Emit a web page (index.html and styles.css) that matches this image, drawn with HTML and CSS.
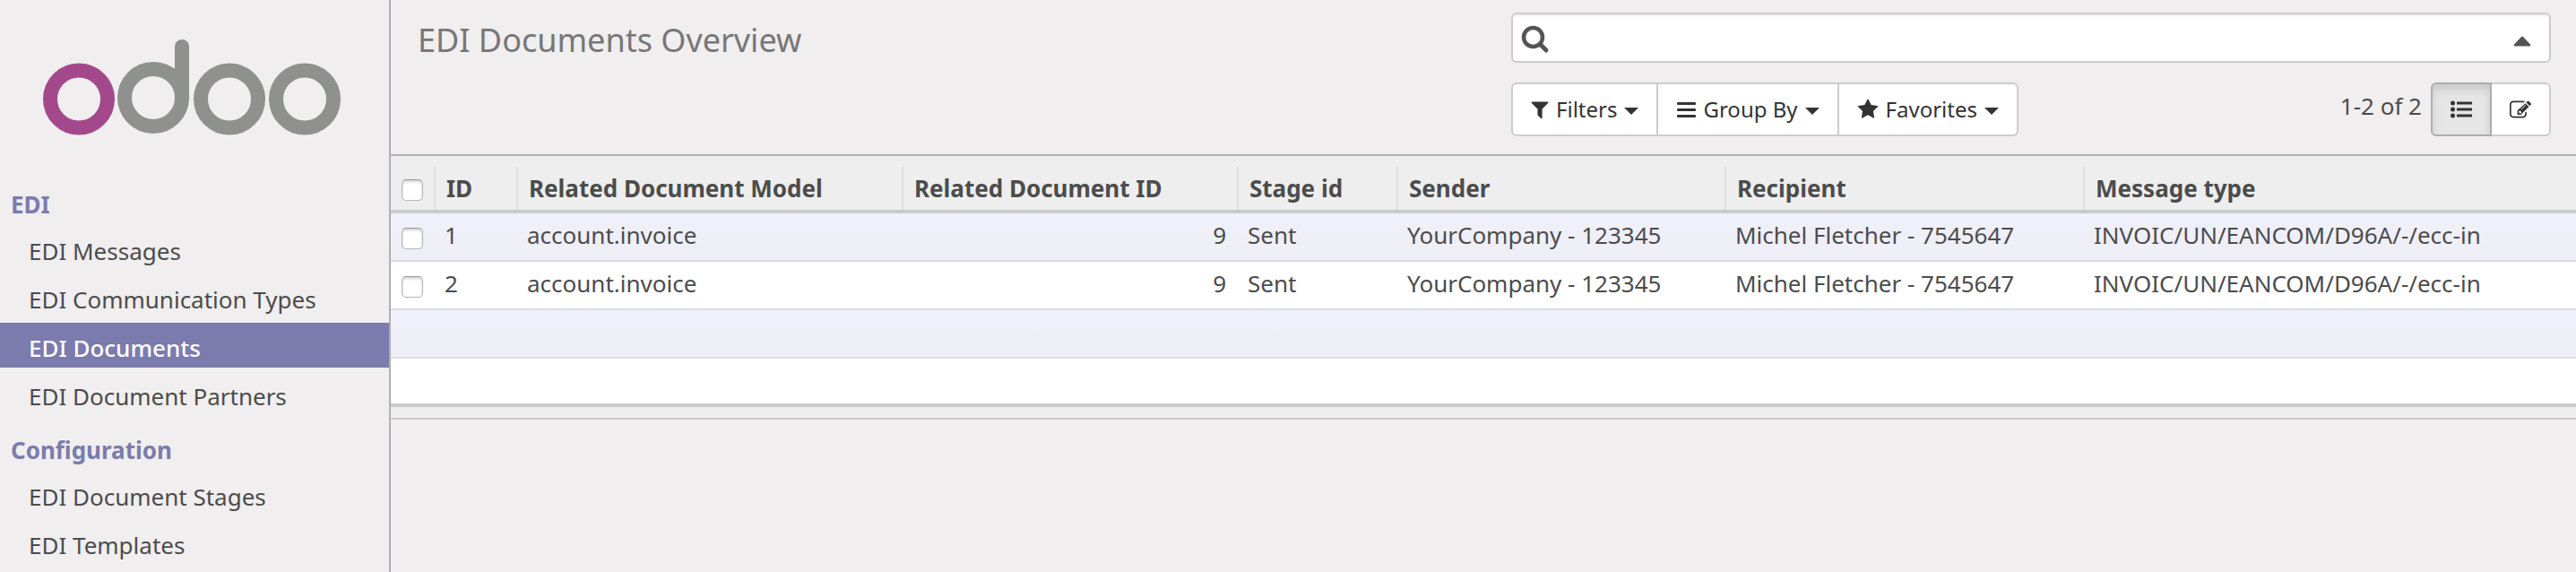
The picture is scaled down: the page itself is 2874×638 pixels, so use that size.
FILE: index.html
```html
<!DOCTYPE html>
<html lang="en">
<head>
<meta charset="utf-8">
<title>EDI Documents Overview - Odoo</title>
<link rel="stylesheet" href="styles.css">
</head>
<body>
<div class="app">
  <aside class="sidebar">
    <a class="logo" href="#" aria-label="odoo">
      <svg width="340" height="112" viewBox="48 42 340 112" fill="none" stroke="#8f918f" stroke-width="16" stroke-linecap="round">
        <circle cx="89" cy="110.500" r="32" stroke="#a3498b"/>
        <circle cx="172" cy="109" r="32"/>
        <path d="M204 52V109"/>
        <circle cx="257" cy="110.500" r="32"/>
        <circle cx="341" cy="110.500" r="32"/>
      </svg>
    </a>
    <nav class="menu">
      <section class="menu-section">
        <h2 class="menu-title">EDI</h2>
        <ul class="menu-list">
          <li><a class="menu-link" href="#">EDI Messages</a></li>
          <li><a class="menu-link" href="#">EDI Communication Types</a></li>
          <li><a class="menu-link active" href="#" aria-current="page">EDI Documents</a></li>
          <li><a class="menu-link" href="#">EDI Document Partners</a></li>
        </ul>
      </section>
      <section class="menu-section">
        <h2 class="menu-title">Configuration</h2>
        <ul class="menu-list">
          <li><a class="menu-link" href="#">EDI Document Stages</a></li>
          <li><a class="menu-link" href="#">EDI Templates</a></li>
        </ul>
      </section>
    </nav>
  </aside>

  <main class="content">
    <header class="control-panel">
      <h1 class="page-title">EDI Documents Overview</h1>
      <div class="panel-tools">
        <div class="search">
          <svg class="search-icon" width="32" height="32" viewBox="0 0 32 32" fill="none" stroke="#555" stroke-linecap="round">
            <circle cx="13.500" cy="13.500" r="10.500" stroke-width="4.500"/>
            <path d="M21.500 21.500L28 28" stroke-width="5"/>
          </svg>
          <input class="search-input" type="text" aria-label="Search">
          <button class="search-toggle" type="button" aria-label="Advanced search">
            <svg width="20" height="12" viewBox="0 0 20 12"><path d="M10 0.500Q10.500 0.500 11 1L19 9.500Q20 11.500 18 11.500H2Q0 11.500 1 9.500L9 1Q9.500 0.500 10 0.500z" fill="#555"/></svg>
          </button>
        </div>
        <div class="tool-row">
          <div class="btn-group">
            <button class="btn" type="button">
              <svg width="20" height="24" viewBox="180 0 1432 1792"><path fill="currentColor" d="M1595 295q17 41-14 70l-493 493v742q0 42-39 59-13 5-25 5-27 0-45-19l-256-256q-19-19-19-45v-486L211 365q-31-29-14-70 17-39 59-39h1280q42 0 59 39z"/></svg>
              <span>Filters</span><span class="caret"></span>
            </button>
            <button class="btn" type="button">
              <svg width="22" height="24" viewBox="0 0 22 24" fill="currentColor"><rect x="1" y="4" width="21" height="3" rx="1"/><rect x="1" y="11" width="21" height="3" rx="1"/><rect x="1" y="18" width="21" height="3" rx="1"/></svg>
              <span>Group By</span><span class="caret"></span>
            </button>
            <button class="btn" type="button">
              <svg width="24" height="24" viewBox="0 0 1792 1792"><path fill="currentColor" d="M1728 647q0 22-26 48l-363 354 86 500q1 7 1 20 0 21-10.500 35.500T1385 1619q-19 0-40-12l-449-236-449 236q-22 12-40 12-21 0-31.500-14.500T365 1569q0-6 2-20l86-500L89 695q-25-27-25-48 0-37 56-46l502-73 225-455q19-41 49-41t49 41l225 455 502 73q56 9 56 46z"/></svg>
              <span>Favorites</span><span class="caret"></span>
            </button>
          </div>
          <div class="pager-views">
            <span class="pager">1-2 of 2</span>
            <div class="btn-group">
              <button class="btn btn-view pressed" type="button" aria-label="List" aria-pressed="true">
                <svg width="24" height="24" viewBox="0 0 24 24" fill="currentColor"><circle cx="2.500" cy="5" r="2.500"/><circle cx="2.500" cy="12" r="2.500"/><circle cx="2.500" cy="19" r="2.500"/><rect x="7" y="3.500" width="17" height="3"/><rect x="7" y="10.500" width="17" height="3"/><rect x="7" y="17.500" width="17" height="3"/></svg>
              </button>
              <button class="btn btn-view" type="button" aria-label="Form">
                <svg width="24" height="24" viewBox="0 -64 1792 1792"><path fill="currentColor" d="M888 1184l116-116-152-152-116 116v56h96v96h56zm440-720q-16-16-33 1L945 815q-17 17-1 33t33-1l350-350q17-17 1-33zm80 594v190q0 119-84.500 203.500T1120 1536H288q-119 0-203.500-84.500T0 1248V416q0-119 84.500-203.500T288 128h832q63 0 117 25 15 7 18 23 3 17-9 29l-49 49q-14 14-32 8-23-6-45-6H288q-66 0-113 47t-47 113v832q0 66 47 113t113 47h832q66 0 113-47t47-113v-126q0-13 9-22l64-64q15-15 35-7t20 29zm-96-738l288 288-672 672H640V928zm444 132l-92 92-288-288 92-92q28-28 68-28t68 28l152 152q28 28 28 68t-28 68z"/></svg>
              </button>
            </div>
          </div>
        </div>
      </div>
    </header>

    <table class="list">
      <colgroup>
        <col class="col-check"><col class="col-id"><col class="col-model"><col class="col-docid"><col class="col-stage"><col class="col-sender"><col class="col-recipient"><col>
      </colgroup>
      <thead>
        <tr>
          <th class="check"><input type="checkbox" aria-label="Select all"></th>
          <th>ID</th>
          <th>Related Document Model</th>
          <th>Related Document ID</th>
          <th>Stage id</th>
          <th>Sender</th>
          <th>Recipient</th>
          <th>Message type</th>
        </tr>
      </thead>
      <tbody>
        <tr>
          <td class="check"><input type="checkbox" aria-label="Select document 1"></td>
          <td>1</td>
          <td>account.invoice</td>
          <td class="number">9</td>
          <td>Sent</td>
          <td>YourCompany - 123345</td>
          <td>Michel Fletcher - 7545647</td>
          <td>INVOIC/UN/EANCOM/D96A/-/ecc-in</td>
        </tr>
        <tr>
          <td class="check"><input type="checkbox" aria-label="Select document 2"></td>
          <td>2</td>
          <td>account.invoice</td>
          <td class="number">9</td>
          <td>Sent</td>
          <td>YourCompany - 123345</td>
          <td>Michel Fletcher - 7545647</td>
          <td>INVOIC/UN/EANCOM/D96A/-/ecc-in</td>
        </tr>
        <tr><td colspan="8">&nbsp;</td></tr>
        <tr><td colspan="8">&nbsp;</td></tr>
      </tbody>
      <tfoot>
        <tr><td colspan="8"></td></tr>
      </tfoot>
    </table>
  </main>
</div>
</body>
</html>
```
FILE: styles.css
```css
* {
  box-sizing: border-box;
}

body {
  margin: 0;
  background: #f0eeee;
  color: #4c4c4c;
  font-family: "Noto Sans", "Open Sans", sans-serif;
  font-size: 26px;
  line-height: 36px;
}

svg {
  display: block;
  flex: none;
}

.app {
  display: flex;
  min-height: 100vh;
}

/* Sidebar */

.sidebar {
  flex: none;
  width: 436px;
  border-right: 2px solid #afafb6;
}

.logo {
  display: flex;
  justify-content: center;
  padding: 42px 0 36px;
}

.menu-section {
  padding-top: 20px;
}

.menu-title {
  margin: 0 0 6px;
  padding-left: 12px;
  color: #7c7bad;
  font-size: 26px;
  font-weight: 700;
}

.menu-list {
  display: flex;
  flex-direction: column;
  gap: 4px;
  margin: 0;
  padding: 0;
  list-style: none;
}

.menu-link {
  display: block;
  padding: 10px 0 4px 32px;
  color: inherit;
  text-decoration: none;
  white-space: nowrap;
}

.menu-link.active {
  background: #7c7bad;
  color: #fff;
  font-weight: 500;
}

/* Control panel */

.content {
  flex: 1;
  min-width: 0;
}

.control-panel {
  display: grid;
  grid-template-columns: 61fr 58fr;
  padding: 14px 28px 20px 30px;
  border-bottom: 2px solid #afafb6;
}

.page-title {
  margin: 0;
  padding-top: 5px;
  color: #777;
  font-size: 36px;
  font-weight: 400;
  line-height: 52px;
}

.search {
  display: flex;
  align-items: center;
  height: 56px;
  padding: 4px 20px 0 9px;
  border: 2px solid #ccc;
  border-radius: 6px;
  background: #fff;
  box-shadow: inset 0 2px 2px rgba(0, 0, 0, 0.075);
}

.search-input {
  flex: 1;
  min-width: 0;
  border: 0;
  background: none;
  font: inherit;
  outline: 0;
}

.search-toggle {
  padding: 4px 0 0;
  border: 0;
  background: none;
}

.tool-row {
  display: flex;
  justify-content: space-between;
  margin-top: 22px;
}

.btn-group {
  display: flex;
}

.btn {
  display: flex;
  align-items: center;
  gap: 8px;
  height: 60px;
  margin: 0 0 0 -2px;
  padding: 0 20px;
  border: 2px solid #ccc;
  background: #fff;
  color: #333;
  font-family: inherit;
  font-size: 24px;
  line-height: 34px;
}

.btn:first-child {
  margin-left: 0;
  border-radius: 6px 0 0 6px;
}

.btn:last-child {
  border-radius: 0 6px 6px 0;
}

.btn-view {
  width: 68px;
}

.btn.pressed {
  z-index: 1;
  border-color: #adadad;
  background: #e6e6e6;
  box-shadow: inset 0 6px 10px rgba(0, 0, 0, 0.125);
}

.caret {
  margin-top: 4px;
  border: 8px solid transparent;
  border-top-color: currentColor;
  border-bottom: 0;
}

.pager-views {
  display: flex;
  gap: 10px;
}

.pager {
  padding-top: 8px;
}

/* Record list */

.list {
  width: 100%;
  border-collapse: separate;
  border-spacing: 0;
  table-layout: fixed;
}

.col-check { width: 48px; }
.col-id { width: 92px; }
.col-model { width: 430px; }
.col-docid { width: 374px; }
.col-stage { width: 178px; }
.col-sender { width: 366px; }
.col-recipient { width: 400px; }

.list th,
.list td {
  text-align: left;
  white-space: nowrap;
}

.list thead th {
  padding: 20px 12px 8px 14px;
  border-bottom: 4px solid #cacaca;
  background: linear-gradient(#dfdfdf, #dfdfdf) 0 100% / 2px 48px no-repeat #eee;
  font-weight: 700;
  line-height: 32px;
}

.list thead .check {
  padding: 18px 0 10px 12px;
  background: #eee;
}

.list tbody td {
  padding: 6px 12px 10px;
  border-bottom: 2px solid #dcdce0;
  background: #fff;
}

.list tbody tr:nth-child(odd) td {
  background: linear-gradient(#f0f0fa, #eeeef6);
}

.list tbody tr:last-child td {
  padding: 6px 12px 8px;
  border-bottom: 4px solid #cacaca;
}

.list tbody .number {
  text-align: right;
}

.list tbody .check {
  padding-right: 0;
}

.list tfoot td {
  height: 14px;
  padding: 0;
  border-bottom: 2px solid #cacaca;
  background: #eee;
}

.list input {
  display: block;
  appearance: none;
  width: 24px;
  height: 24px;
  margin: 8px 0 0;
  border: 1px solid #b4b4b4;
  border-top-color: #999;
  border-radius: 5px;
  background: #fff;
  box-shadow: inset 0 2px 3px rgba(0, 0, 0, 0.18);
}
```
